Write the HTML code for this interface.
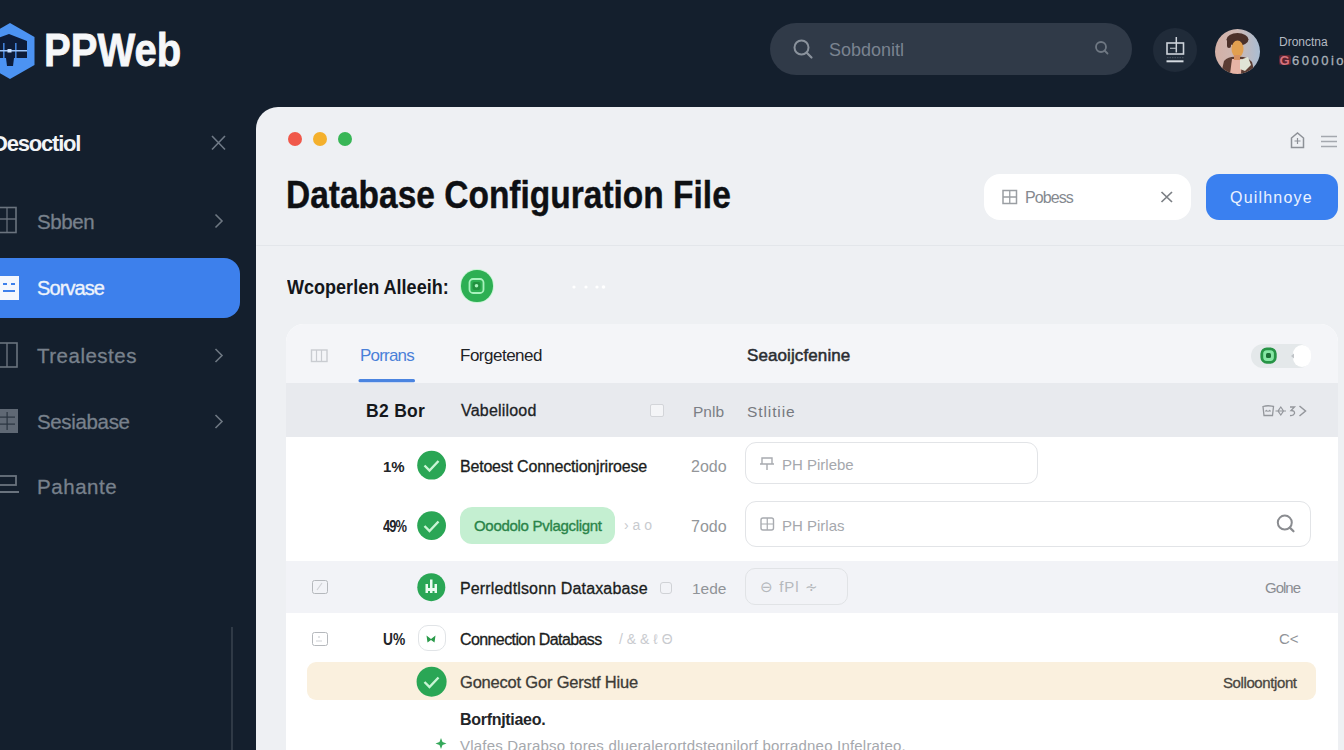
<!DOCTYPE html>
<html><head><meta charset="utf-8">
<style>
*{box-sizing:border-box;margin:0;padding:0}
html,body{width:1344px;height:750px;overflow:hidden;background:#141f2d;font-family:"Liberation Sans",sans-serif}
.a{position:absolute}
.t{position:absolute;white-space:nowrap;line-height:1}
svg{position:absolute;overflow:visible}
</style></head><body>
<!-- ============ TOP BAR ============ -->
<svg style="left:0;top:0" width="40" height="90" viewBox="0 0 40 90">
  <path d="M10 23 L34.5 37 L34.5 65 L10 79 L-14.5 65 L-14.5 37 Z" fill="#4c93f2"/>
  <path d="M-10 41 L9 34 L27 41 L27 58 L14 58 L13 66 L7 66 L6 58 L-10 58 Z" fill="#0d1c38"/>
  <rect x="3" y="43" width="1.6" height="15" fill="#3f7fd6"/>
  <rect x="15" y="43" width="1.6" height="15" fill="#3f7fd6"/>
  <rect x="-10" y="50" width="37" height="1.5" fill="#9cc4f8"/>
  <rect x="7.5" y="49" width="4" height="3.5" fill="#c8defb"/>
</svg>
<div class="t" style="left:44px;top:27px;font-size:46px;font-weight:700;color:#f6f7f9;transform:scaleX(.87);transform-origin:0 0;-webkit-text-stroke:.8px #f6f7f9">PPWeb</div>

<div class="a" style="left:770px;top:23px;width:362px;height:52px;border-radius:26px;background:#303a48"></div>
<svg style="left:0;top:0" width="1" height="1">
  <circle cx="801.5" cy="47.5" r="7" fill="none" stroke="#8a929c" stroke-width="2"/>
  <line x1="806.5" y1="52.5" x2="811.5" y2="57.5" stroke="#8a929c" stroke-width="2.2" stroke-linecap="round"/>
  <circle cx="1101" cy="47" r="5" fill="none" stroke="#6f7883" stroke-width="1.8"/>
  <line x1="1104.5" y1="50.5" x2="1107.5" y2="53.5" stroke="#6f7883" stroke-width="1.8" stroke-linecap="round"/>
</svg>
<div class="t" style="left:829px;top:41px;font-size:18px;color:#7a8390;letter-spacing:0">Sobdonitl</div>

<div class="a" style="left:1153px;top:28px;width:44px;height:44px;border-radius:50%;background:#202b39"></div>
<svg style="left:0;top:0" width="1" height="1">
  <rect x="1167" y="43" width="16.5" height="11" fill="none" stroke="#cdd3da" stroke-width="1.6"/>
  <line x1="1176.3" y1="37" x2="1176.3" y2="52.5" stroke="#cdd3da" stroke-width="1.5"/>
  <line x1="1170" y1="48.3" x2="1176.3" y2="48.3" stroke="#aeb5bd" stroke-width="1.2"/>
  <line x1="1167" y1="57.7" x2="1183.5" y2="57.7" stroke="#4a5562" stroke-width="1" stroke-dasharray="1.5 1"/>
  <line x1="1166.5" y1="61.3" x2="1183.5" y2="61.3" stroke="#d5dae0" stroke-width="2"/>
</svg>
<svg style="left:1215px;top:28.5px" width="45" height="45" viewBox="0 0 45 45">
  <defs><linearGradient id="avbg" x1="0" x2="1" y1="0" y2="0"><stop offset="0" stop-color="#d4b0a6"/><stop offset=".5" stop-color="#cdb8b4"/><stop offset="1" stop-color="#a9bdd3"/></linearGradient>
  <clipPath id="avc"><circle cx="22.5" cy="22.5" r="22.5"/></clipPath></defs>
  <g clip-path="url(#avc)">
    <rect width="45" height="45" fill="url(#avbg)"/>
    <path d="M6 45 L9 32 Q14 27 22 28 Q32 27 37 33 L40 45 Z" fill="#5b3c33"/>
    <path d="M15 45 L17 30 L27 30 L26 45 Z" fill="#e6b4a6"/>
    <path d="M25 31 L33 28 L36 36 L30 42 L25 40 Z" fill="#dfe4d6"/>
    <ellipse cx="22.5" cy="10.5" rx="11" ry="6.5" fill="#4b3029"/>
    <rect x="12" y="9" width="4" height="10" rx="2" fill="#4b3029"/>
    <ellipse cx="22.5" cy="20" rx="6" ry="8.5" fill="#e2a050"/>
    <rect x="19" y="26" width="6" height="5" fill="#d69060"/>
  </g>
</svg>
<div class="t" style="left:1279px;top:36px;font-size:12px;color:#b4bac2">Dronctna</div>
<div class="a" style="left:1279px;top:54.5px;width:11.5px;height:10.5px;border-radius:2px;background:#5a2430"></div><div class="t" style="left:1279.5px;top:54px;font-size:13px;font-weight:700;color:#d8727c">G</div><div class="t" style="left:1292px;top:54px;font-size:13px;color:#a9b0b8;letter-spacing:2.5px;-webkit-text-stroke:.3px #a9b0b8">6000io</div>

<!-- ============ SIDEBAR ============ -->
<div class="t" style="left:-8px;top:133px;font-size:22px;font-weight:700;color:#f2f4f7;letter-spacing:-1.2px">Desoctiol</div>
<svg style="left:0;top:0" width="1" height="1">
  <path d="M212 136 L225 149.5 M225 136 L212 149.5" stroke="#6f7986" stroke-width="1.6"/>
  <path d="M215.5 214.5 L222 221 L215.5 227.5" fill="none" stroke="#6e7782" stroke-width="1.6"/>
  <path d="M215.5 282 L222 288.5 L215.5 295" fill="none" stroke="#c9dcfb" stroke-width="1.6"/>
  <path d="M215.5 349 L222 355.5 L215.5 362" fill="none" stroke="#6e7782" stroke-width="1.6"/>
  <path d="M215.5 415 L222 421.5 L215.5 428" fill="none" stroke="#6e7782" stroke-width="1.6"/>
</svg>
<div class="a" style="left:0;top:258px;width:240px;height:60px;border-radius:0 16px 16px 0;background:#3d80ec"></div>
<!-- sidebar icons -->
<svg style="left:0;top:0" width="1" height="1">
  <rect x="-3" y="207.5" width="19" height="25" fill="none" stroke="#6a737e" stroke-width="1.6"/>
  <line x1="-3" y1="219" x2="16" y2="219" stroke="#6a737e" stroke-width="1.4"/>
  <line x1="7" y1="207.5" x2="7" y2="232" stroke="#6a737e" stroke-width="1.2"/>
  <rect x="-2" y="276" width="21" height="24" fill="#f4f7fd"/>
  <rect x="3" y="283" width="4" height="2" fill="#3d80ec"/><rect x="11" y="283" width="4" height="2" fill="#3d80ec"/>
  <rect x="3" y="290" width="12" height="2" fill="#3d80ec"/>
  <rect x="-3" y="343" width="20" height="24" fill="none" stroke="#6a737e" stroke-width="1.6"/>
  <line x1="7" y1="343" x2="7" y2="367" stroke="#6a737e" stroke-width="1.4"/>
  <rect x="-3" y="409" width="21" height="24" fill="#5f6874"/>
  <rect x="-3" y="416.5" width="18" height="1.2" fill="#2a3441"/><rect x="-3" y="423.5" width="18" height="1.2" fill="#2a3441"/>
  <rect x="6.5" y="412" width="1.2" height="18" fill="#2a3441"/>
  <rect x="-3" y="476" width="19" height="9" fill="none" stroke="#6a737e" stroke-width="1.8"/>
  <line x1="-3" y1="492" x2="19" y2="492" stroke="#6a737e" stroke-width="2"/>
  <line x1="232" y1="627" x2="232" y2="750" stroke="#37414d" stroke-width="1.6"/>
</svg>
<div class="t" style="left:37px;top:212px;font-size:20.5px;color:#78818c;-webkit-text-stroke:.3px #78818c;letter-spacing:-.4px">Sbben</div>
<div class="t" style="left:37px;top:278px;font-size:20px;color:#eef3fb;letter-spacing:-.9px;-webkit-text-stroke:.35px #eef3fb">Sorvase</div>
<div class="t" style="left:37px;top:346px;font-size:20.5px;color:#78818c;-webkit-text-stroke:.3px #78818c;letter-spacing:.5px">Trealestes</div>
<div class="t" style="left:37px;top:412px;font-size:20.5px;color:#78818c;-webkit-text-stroke:.3px #78818c;letter-spacing:-.35px">Sesiabase</div>
<div class="t" style="left:37px;top:477px;font-size:20.5px;color:#78818c;-webkit-text-stroke:.3px #78818c;letter-spacing:.55px">Pahante</div>

<!-- ============ MAIN PANEL ============ -->
<div class="a" style="left:256px;top:107px;width:1100px;height:660px;border-radius:22px 0 0 0;background:#eef0f3"></div>
<div class="a" style="left:288px;top:132px;width:14.4px;height:14.4px;border-radius:50%;background:#f0584a"></div>
<div class="a" style="left:313px;top:132px;width:14.4px;height:14.4px;border-radius:50%;background:#f4b02c"></div>
<div class="a" style="left:338px;top:132px;width:14.4px;height:14.4px;border-radius:50%;background:#38b656"></div>
<svg style="left:0;top:0" width="1" height="1">
  <path d="M1291.5 138 L1297.5 133 L1303.5 138 L1303.5 147.5 L1291.5 147.5 Z" fill="none" stroke="#8d9197" stroke-width="1.5"/>
  <path d="M1297.5 138 V144 M1294.5 141 H1300.5" stroke="#8d9197" stroke-width="1.2"/>
  <path d="M1321 136.5 H1337 M1321 141.5 H1337 M1321 146.5 H1337" stroke="#a4a8ae" stroke-width="1.6"/>
</svg>
<div class="t" style="left:286px;top:175.5px;font-size:38.5px;font-weight:700;color:#0e1013;transform:scaleX(.87);transform-origin:0 0;-webkit-text-stroke:.4px #0e1013">Database Configuration File</div>

<div class="a" style="left:984px;top:174px;width:207px;height:46px;border-radius:16px;background:#ffffff"></div>
<svg style="left:0;top:0" width="1" height="1">
  <rect x="1003" y="190.5" width="13.5" height="13" fill="none" stroke="#9a9ea3" stroke-width="1.5"/>
  <path d="M1003 197 H1016.5 M1009.75 190.5 V203.5" stroke="#9a9ea3" stroke-width="1.3"/>
  <path d="M1161.5 192 L1172 202 M1172 192 L1161.5 202" stroke="#7b7f84" stroke-width="1.7"/>
</svg>
<div class="t" style="left:1025px;top:190px;font-size:16px;color:#85898f;letter-spacing:-.9px">Pobess</div>
<div class="a" style="left:1206px;top:174px;width:132px;height:45.5px;border-radius:13px;background:#3a80f0"></div>
<div class="t" style="left:1230px;top:190px;font-size:16px;color:#eaf2ff;letter-spacing:1.2px">Quilhnoye</div>
<div class="a" style="left:256px;top:245px;width:1088px;height:1px;background:#e3e6ea"></div>

<div class="t" style="left:287px;top:278px;font-size:19.5px;font-weight:700;color:#14171b;transform:scaleX(.925);transform-origin:0 0">Wcoperlen Alleeih:</div>
<div class="a" style="left:461px;top:270px;width:31.5px;height:31.5px;border-radius:50%;background:#2daf53;box-shadow:0 0 0 1px #c8f5d4"></div>
<svg style="left:0;top:0" width="1" height="1">
  <rect x="469.5" y="279" width="14" height="14" rx="3.5" fill="none" stroke="#a8f2bd" stroke-width="1.8"/>
  <rect x="472.5" y="282" width="8" height="8" rx="2" fill="#22913f"/>
  <circle cx="476.5" cy="285.8" r="1.8" fill="#a8f2bd"/>
  <circle cx="574" cy="287" r="1.6" fill="#ffffff"/><circle cx="586" cy="287" r="1.6" fill="#ffffff"/><circle cx="597" cy="287" r="1.6" fill="#ffffff"/><circle cx="603.5" cy="287" r="1.8" fill="#ffffff"/>
</svg>

<!-- ============ TABLE CARD ============ -->
<div class="a" style="left:286px;top:324px;width:1052px;height:440px;border-radius:18px 18px 0 0;background:#ffffff;overflow:hidden">
  <div class="a" style="left:0;top:0;width:1052px;height:59px;background:#f4f5f8"></div>
  <div class="a" style="left:0;top:59px;width:1052px;height:54px;background:#e8eaee"></div>
  <div class="a" style="left:0;top:237px;width:1052px;height:52px;background:#f2f3f7"></div>
  <div class="a" style="left:21px;top:338px;width:1009px;height:38px;border-radius:9px;background:#faf0de"></div>
</div>

<!-- tab bar -->
<svg style="left:0;top:0" width="1" height="1">
  <rect x="311.5" y="350" width="15.5" height="11.5" fill="none" stroke="#c9ccd1" stroke-width="1.4"/>
  <path d="M316.5 350 V361.5 M321.5 350 V361.5" stroke="#c9ccd1" stroke-width="1.2"/>
  <rect x="358.5" y="379" width="56.5" height="3.2" rx="1.5" fill="#4a84e0"/>
</svg>
<div class="t" style="left:360px;top:347px;font-size:17px;color:#4a80d8;letter-spacing:-.8px">Porrans</div>
<div class="t" style="left:460px;top:347px;font-size:17px;color:#1e2226;letter-spacing:-.5px">Forgetened</div>
<div class="t" style="left:747px;top:347px;font-size:17px;color:#2a2d31;letter-spacing:.1px;-webkit-text-stroke:.5px #2a2d31">Seaoijcfenine</div>
<!-- toggle -->
<div class="a" style="left:1251px;top:344px;width:60px;height:24px;border-radius:12px;background:#e4e8ea"></div>
<div class="a" style="left:1293px;top:345px;width:18px;height:22px;border-radius:10px;background:#ffffff"></div>
<svg style="left:0;top:0" width="1" height="1">
  <rect x="1261.8" y="348.8" width="13.5" height="13.5" rx="5" fill="#86e6a4" stroke="#279446" stroke-width="2.8"/>
  <rect x="1266" y="353" width="5" height="5" rx="1.5" fill="#1d6f36"/>
  <path d="M1291 356 L1294 353.5 L1294 358.5 Z" fill="#c0c4c8"/>
</svg>
<!-- header row -->
<div class="t" style="left:366px;top:403px;font-size:17.5px;font-weight:700;color:#15181c;letter-spacing:.3px">B2 Bor</div>
<div class="t" style="left:461px;top:403px;font-size:16px;color:#202326;letter-spacing:.2px;-webkit-text-stroke:.3px #202326">Vabelilood</div>
<div class="a" style="left:650px;top:404px;width:13.5px;height:13px;border:1.4px solid #d3d5d9;border-radius:2px;background:#f4f5f7"></div>
<div class="t" style="left:693px;top:404px;font-size:15.5px;color:#7b7f85">Pnlb</div>
<div class="t" style="left:747px;top:404px;font-size:15.5px;color:#76797f;letter-spacing:.9px">Stlitiie</div>
<svg style="left:0;top:0" width="1" height="1">
  <path d="M1263 406.5 Q1268 405 1273.5 406.5 L1272.5 415.5 H1264 Z" fill="none" stroke="#94979c" stroke-width="1.3"/>
  <path d="M1266 412 V410 L1268 411.5 L1270 410 V412" fill="none" stroke="#94979c" stroke-width="1"/>
  <path d="M1275.5 411 H1286 M1280.8 407 L1283.5 411 L1280.8 415 L1278 411 Z" fill="none" stroke="#94979c" stroke-width="1.2"/>
  <path d="M1290 407 H1294.5 L1291 410.5 Q1295 410.5 1294.5 413.5 Q1293.5 416 1290 415.5" fill="none" stroke="#94979c" stroke-width="1.3"/>
  <path d="M1299.5 406 L1305.5 411 L1299.5 416" fill="none" stroke="#94979c" stroke-width="1.5"/>
</svg>
<!-- row 1 -->
<div class="t" style="left:383px;top:459px;font-size:15px;font-weight:700;color:#222428">1%</div>
<div class="t" style="left:460px;top:459px;font-size:16px;color:#1b1d20;letter-spacing:-.2px;-webkit-text-stroke:.3px #1b1d20">Betoest Connectionjriroese</div>
<div class="t" style="left:691px;top:459px;font-size:16px;color:#939699">2odo</div>
<div class="a" style="left:745px;top:441.5px;width:292.5px;height:42.5px;border:1.3px solid #e2e4e7;border-radius:11px;background:#fff"></div>
<svg style="left:0;top:0" width="1" height="1">
  <path d="M762 458 H772 V464 H762 Z M760 464 H774 M767 464 V470" fill="none" stroke="#a8abb0" stroke-width="1.4"/>
</svg>
<div class="t" style="left:782px;top:457px;font-size:15px;color:#a5a8ad">PH Pirlebe</div>
<!-- row 2 -->
<div class="t" style="left:383px;top:518px;font-size:16.5px;font-weight:700;color:#222428;letter-spacing:-1.2px;transform:scaleX(.78);transform-origin:0 0">49%</div>
<div class="a" style="left:459.5px;top:507px;width:155px;height:37px;border-radius:12px;background:#c4efd1"></div>
<div class="t" style="left:474px;top:518px;font-size:15px;color:#2a8449;letter-spacing:-.3px;-webkit-text-stroke:.35px #2a8449">Ooodolo Pvlagclignt</div>
<div class="t" style="left:624px;top:518px;font-size:14px;color:#c8cbcf">› a o</div>
<div class="t" style="left:691px;top:519px;font-size:16px;color:#939699">7odo</div>
<div class="a" style="left:745px;top:500.5px;width:566px;height:46px;border:1.3px solid #e2e4e7;border-radius:11px;background:#fff"></div>
<svg style="left:0;top:0" width="1" height="1">
  <rect x="761" y="518" width="12.5" height="12" rx="2" fill="none" stroke="#a8abb0" stroke-width="1.4"/>
  <path d="M761 524 H773.5 M767.25 518 V530" stroke="#a8abb0" stroke-width="1.2"/>
  <circle cx="1284.8" cy="522.6" r="7" fill="none" stroke="#8a8c90" stroke-width="2"/>
  <line x1="1289.8" y1="527.6" x2="1293.5" y2="531.3" stroke="#8a8c90" stroke-width="2.2" stroke-linecap="round"/>
</svg>
<div class="t" style="left:782px;top:518px;font-size:15px;color:#a5a8ad">PH Pirlas</div>
<!-- row 3 -->
<div class="a" style="left:311.5px;top:579.5px;width:16px;height:14.5px;border:1.8px solid #b5b8bc;border-radius:2.5px"></div>
<div class="t" style="left:460px;top:581px;font-size:16px;color:#1b1d20;letter-spacing:.15px;-webkit-text-stroke:.3px #1b1d20">Perrledtlsonn Dataxabase</div>
<div class="a" style="left:660px;top:582px;width:12px;height:11.5px;border:1.3px solid #d0d2d6;border-radius:3px"></div>
<div class="t" style="left:692px;top:580.5px;font-size:15.5px;color:#909398">1ede</div>
<div class="a" style="left:745px;top:568px;width:102.5px;height:37px;border:1.3px solid #e1e3e6;border-radius:10px"></div>
<div class="t" style="left:760px;top:579px;font-size:15px;color:#b5b8bc;letter-spacing:1px">⊖ fPl ∻</div>
<div class="t" style="left:1265px;top:579.5px;font-size:15px;color:#8a8d92;letter-spacing:-1px">Golne</div>
<svg style="left:0;top:0" width="1" height="1"><path d="M317 590 L322 583" stroke="#d0d2d6" stroke-width="1.2"/><path d="M316 641 H322 M319 636 V638" stroke="#d0d2d6" stroke-width="1.2"/></svg>
<!-- row 4 -->
<div class="a" style="left:311.5px;top:631.5px;width:16px;height:14.5px;border:1.8px solid #b5b8bc;border-radius:2.5px"></div>
<div class="t" style="left:383px;top:631.5px;font-size:16px;font-weight:700;color:#222428;transform:scaleX(.86);transform-origin:0 0">U%</div>
<div class="a" style="left:417.5px;top:625px;width:28px;height:26px;border:1.3px solid #e1e4e7;border-radius:10px;background:#fff"></div>
<div class="t" style="left:460px;top:632px;font-size:16px;color:#1b1d20;letter-spacing:-.6px;-webkit-text-stroke:.3px #1b1d20">Connection Databass</div>
<div class="t" style="left:619px;top:632px;font-size:14px;color:#c9cbcf;letter-spacing:0">/ &amp; &amp; ℓ Θ</div>
<div class="t" style="left:1279px;top:630.5px;font-size:15px;color:#909398">C&lt;</div>
<!-- row 5 -->
<div class="t" style="left:460px;top:674px;font-size:16.5px;color:#3d3b36;letter-spacing:-.2px;-webkit-text-stroke:.3px #3d3b36">Gonecot Gor Gerstf Hiue</div>
<div class="t" style="left:1223px;top:675px;font-size:15px;color:#4a4740;letter-spacing:-.4px;-webkit-text-stroke:.3px #4a4740">Solloontjont</div>
<div class="t" style="left:460px;top:712px;font-size:16px;font-weight:700;color:#232528;letter-spacing:-.3px">Borfnjtiaeo.</div>
<div class="t" style="left:460px;top:738px;font-size:15px;color:#a5a8ad;letter-spacing:.2px">Vlafes Darabso tores dlueralerortdstegnilorf borradneo Infelrateo.</div>
<!-- green circles -->
<svg style="left:0;top:0" width="1" height="1">
  <circle cx="431.6" cy="465.2" r="14.4" fill="#2aa655"/>
  <path d="M424.5 465.5 L429.5 470.5 L438.5 461" fill="none" stroke="#c9f5d5" stroke-width="2.4"/>
  <circle cx="431.6" cy="525.6" r="14.4" fill="#2aa655"/>
  <path d="M424.5 526 L429.5 531 L438.5 521.5" fill="none" stroke="#c9f5d5" stroke-width="2.4"/>
  <circle cx="431.3" cy="587.2" r="14" fill="#2aa655"/>
  <path d="M425.5 584 H428 V593 H425.5 Z M430 579.5 H432.5 V593 H430 Z M434.5 584 H437 V593 H434.5 Z M425.5 588 H437 V591 H425.5 Z" fill="#eafbef"/>
  <path d="M426.5 635.5 L431 639 L435.5 635.5 L434.5 642.5 L431 640 L427.5 642.5 Z" fill="#2a9a4a"/>
  <circle cx="431.6" cy="681.7" r="15" fill="#2aa655"/>
  <path d="M424.5 682 L429.5 687 L438.5 677.5" fill="none" stroke="#c9f5d5" stroke-width="2.4"/>
  <path d="M441 738 L442.5 742 L446.5 743.5 L442.5 745 L441 749 L439.5 745 L435.5 743.5 L439.5 742 Z" fill="#35a85a"/>
</svg>
</body></html>
